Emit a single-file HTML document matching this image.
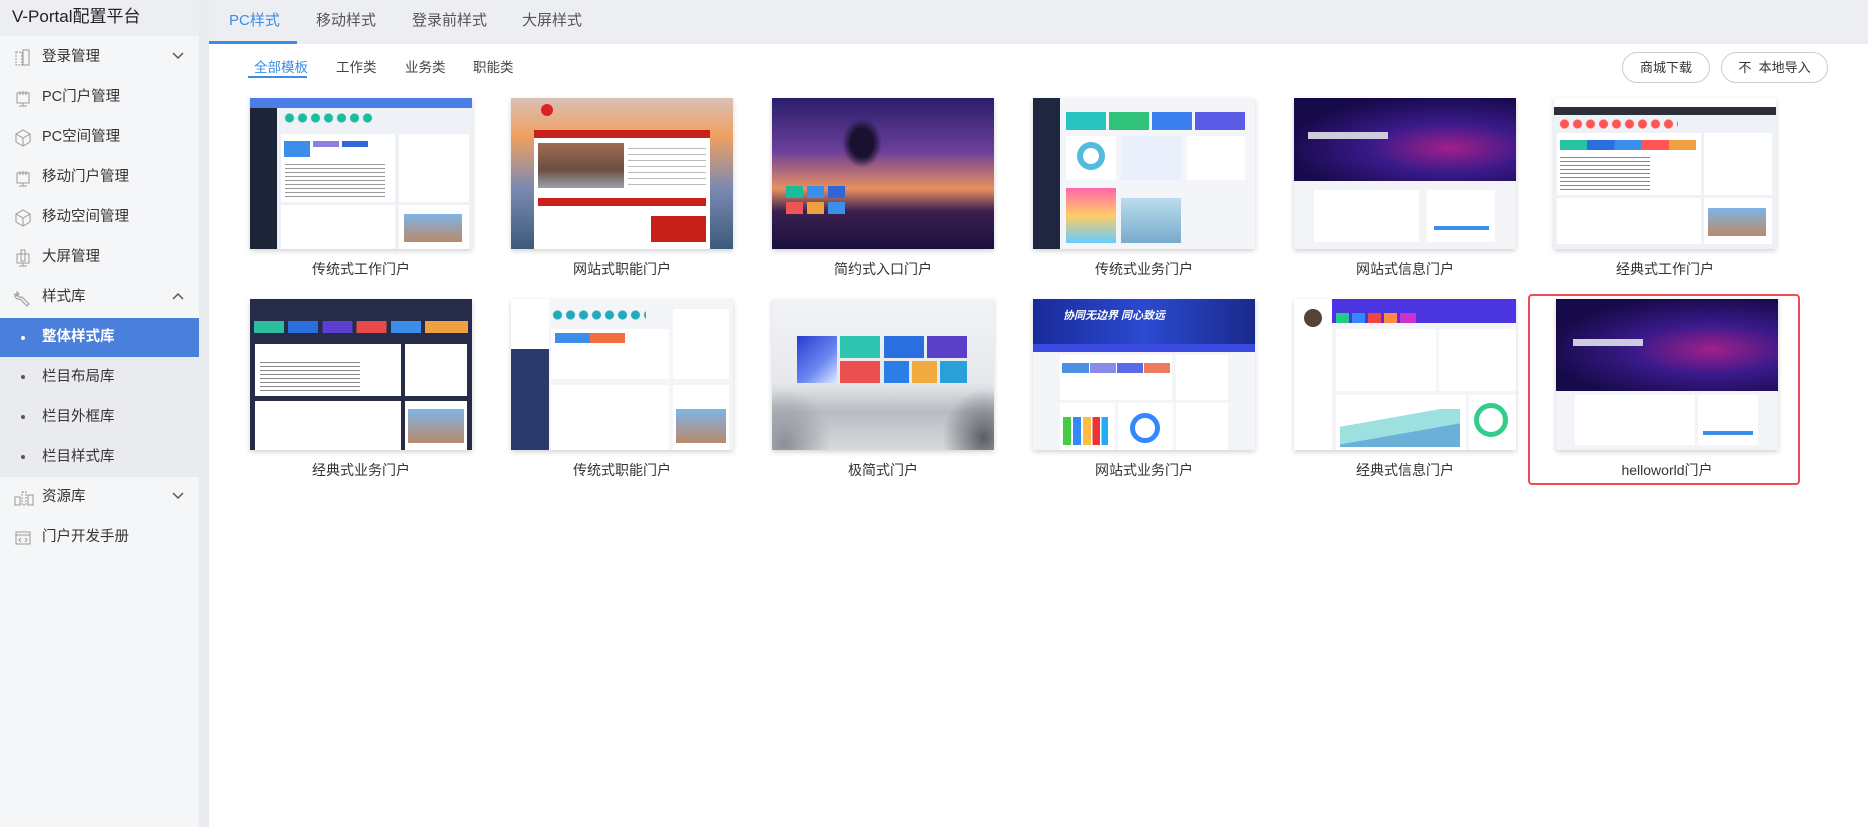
<!DOCTYPE html>
<html><head><meta charset="utf-8">
<style>
*{margin:0;padding:0;box-sizing:border-box}
body{width:1868px;height:827px;overflow:hidden;background:#e9ebee;font-family:"Liberation Sans","Noto Sans CJK SC",sans-serif;color:#333;position:relative}
.side{position:absolute;left:0;top:0;width:199px;height:827px;background:#f5f6f8}
.logo{height:36px;background:#eceef1;font-size:17px;line-height:34px;padding-left:12px;color:#222}
.mi{position:absolute;left:0;width:199px;height:40px;font-size:14.5px;line-height:40px;color:#333}
.mi .t{position:absolute;left:42px}
.mi svg.ic{position:absolute;left:14px;top:12px}
.mi .ch{position:absolute;left:172px;top:15px}
.sub{background:#e9ebef}
.sub .dot{position:absolute;left:21px;top:18px;width:4px;height:4px;border-radius:50%;background:#555}
.act{background:#4a7fdb;color:#fff;font-weight:bold}
.act .dot{background:#fff}
.main{position:absolute;left:209px;top:0;width:1659px;height:827px;background:#fff}
.tabs{position:absolute;left:0;top:0;width:1659px;height:44px;background:#eceef1}
.tab{position:absolute;top:9px;font-size:15px;color:#555}
.stab{position:absolute;top:56px;font-size:13.5px;color:#444}
.btn{position:absolute;top:52px;height:31px;border:1px solid #ccc;border-radius:16px;font-size:13px;line-height:29px;text-align:center;color:#333}
.card{position:absolute;width:222px;height:151px;overflow:hidden;box-shadow:0 2px 5px rgba(0,0,0,.18);background:#f0f2f6}
.lbl{position:absolute;width:222px;text-align:center;font-size:14px;color:#333}
.b{position:absolute}
</style></head><body>
<div class="side">
 <div class="logo">V-Portal配置平台</div>
 <div class="mi" style="top:37px"><svg class="ic" width="18" height="18" viewBox="0 0 18 18" fill="none" stroke="#999"><rect x="2" y="3" width="6" height="13" stroke-dasharray="2 1"/><rect x="9" y="1" width="6" height="15"/></svg><span class="t">登录管理</span><svg class="ch" width="12" height="8"><path d="M1 1l5 5 5-5" stroke="#555" fill="none" stroke-width="1.5"/></svg></div>
 <div class="mi" style="top:77px"><svg class="ic" width="18" height="18" viewBox="0 0 18 18" fill="none" stroke="#999"><rect x="3" y="4" width="12" height="10"/><path d="M6 2v4M9 2v4M12 2v4M9 14v3M5 17h8"/></svg><span class="t">PC门户管理</span></div>
 <div class="mi" style="top:117px"><svg class="ic" width="18" height="18" viewBox="0 0 18 18" fill="none" stroke="#999"><path d="M9 1l7 4v8l-7 4-7-4V5zM2 5l7 4 7-4M9 9v8"/></svg><span class="t">PC空间管理</span></div>
 <div class="mi" style="top:157px"><svg class="ic" width="18" height="18" viewBox="0 0 18 18" fill="none" stroke="#999"><rect x="3" y="4" width="12" height="10"/><path d="M6 2v4M9 2v4M12 2v4M9 14v3M5 17h8"/></svg><span class="t">移动门户管理</span></div>
 <div class="mi" style="top:197px"><svg class="ic" width="18" height="18" viewBox="0 0 18 18" fill="none" stroke="#999"><path d="M9 1l7 4v8l-7 4-7-4V5zM2 5l7 4 7-4M9 9v8"/></svg><span class="t">移动空间管理</span></div>
 <div class="mi" style="top:237px"><svg class="ic" width="18" height="18" viewBox="0 0 18 18" fill="none" stroke="#999"><rect x="3" y="5" width="12" height="9"/><rect x="7" y="1" width="4" height="11"/><path d="M9 14v3M5 17h8"/></svg><span class="t">大屏管理</span></div>
 <div class="mi" style="top:277px"><svg class="ic" width="18" height="18" viewBox="0 0 18 18" fill="none" stroke="#999"><path d="M3 3a4 4 0 0 0 5 5l7 7-2 2-7-7a4 4 0 0 1-5-5l2 2 2-2z"/></svg><span class="t">样式库</span><svg class="ch" width="12" height="8"><path d="M1 7l5-5 5 5" stroke="#555" fill="none" stroke-width="1.5"/></svg></div>
 <div class="mi act" style="top:318px;height:39px;line-height:39px"><span class="dot" style="position:absolute;left:21px;top:18px;width:4px;height:4px;border-radius:50%;background:#fff"></span><span class="t">整体样式库</span></div>
 <div class="mi sub" style="top:357px"><span class="dot"></span><span class="t">栏目布局库</span></div>
 <div class="mi sub" style="top:397px"><span class="dot"></span><span class="t">栏目外框库</span></div>
 <div class="mi sub" style="top:437px;height:40px"><span class="dot"></span><span class="t">栏目样式库</span></div>
 <div class="mi" style="top:477px"><svg class="ic" width="20" height="18" viewBox="0 0 20 18" fill="none" stroke="#999"><rect x="1" y="8" width="5" height="8"/><rect x="8" y="3" width="4" height="13" stroke-dasharray="2 1"/><rect x="14" y="6" width="5" height="10"/></svg><span class="t">资源库</span><svg class="ch" width="12" height="8"><path d="M1 1l5 5 5-5" stroke="#555" fill="none" stroke-width="1.5"/></svg></div>
 <div class="mi" style="top:517px"><svg class="ic" width="18" height="18" viewBox="0 0 18 18" fill="none" stroke="#999"><rect x="2" y="3" width="14" height="12"/><path d="M2 6h14M7 9l-2 2 2 2M11 9l2 2-2 2"/></svg><span class="t">门户开发手册</span></div>
</div>

<div class="main">
 <div class="tabs">
  <span class="tab" style="left:20px;color:#3a8ee6">PC样式</span>
  <div class="b" style="left:0;top:41px;width:88px;height:3px;background:#3a8ee6"></div>
  <span class="tab" style="left:107px">移动样式</span>
  <span class="tab" style="left:203px">登录前样式</span>
  <span class="tab" style="left:313px">大屏样式</span>
 </div>
 <span class="stab" style="left:45px;color:#3a8ee6">全部模板</span>
 <div class="b" style="left:39px;top:76px;width:59px;height:2px;background:#3a8ee6"></div>
 <span class="stab" style="left:127px">工作类</span>
 <span class="stab" style="left:196px">业务类</span>
 <span class="stab" style="left:264px">职能类</span>
 <div class="btn" style="left:1413px;width:88px">商城下载</div>
 <div class="btn" style="left:1512px;width:107px">不&nbsp; 本地导入</div>

 <!-- row 1 -->
 <div class="card" style="left:41px;top:98px;background:#eef1f6">
  <div class="b" style="left:0;top:0;width:222px;height:10px;background:#4a7ee6"></div>
  <div class="b" style="left:0;top:10px;width:27px;height:141px;background:#1d2538"></div>
  <div class="b" style="left:33px;top:14px;width:90px;height:12px;background:radial-gradient(circle,#1abc9c 4px,transparent 5px) 0 0/13px 12px"></div>
  <div class="b" style="left:31px;top:36px;width:114px;height:68px;background:#fff"></div>
  <div class="b" style="left:34px;top:43px;width:26px;height:16px;background:#3b8eea"></div>
  <div class="b" style="left:63px;top:43px;width:26px;height:6px;background:#8e7ee0"></div>
  <div class="b" style="left:92px;top:43px;width:26px;height:6px;background:#3066d8"></div>
  <div class="b" style="left:35px;top:63px;width:100px;height:38px;background:repeating-linear-gradient(#fff 0 3px,#999 3px 4px)"></div>
  <div class="b" style="left:149px;top:36px;width:70px;height:68px;background:#fff"></div>
  <div class="b" style="left:31px;top:107px;width:114px;height:44px;background:#fff"></div>
  <div class="b" style="left:149px;top:107px;width:70px;height:44px;background:#fff"></div>
  <div class="b" style="left:154px;top:116px;width:58px;height:28px;background:linear-gradient(#7fb4e6,#b98a6a)"></div>
 </div>
 <div class="lbl" style="left:41px;top:259px">传统式工作门户</div>

 <div class="card" style="left:302px;top:98px;background:linear-gradient(#d9c0b6 0%,#f0a060 25%,#7a8ab0 60%,#3c5a7a 100%)">
  <div class="b" style="left:23px;top:32px;width:176px;height:119px;background:#fff"></div>
  <div class="b" style="left:23px;top:32px;width:176px;height:8px;background:#c8201a"></div>
  <div class="b" style="left:27px;top:45px;width:86px;height:45px;background:linear-gradient(#a06a50,#6a5040 60%,#9aa0b0)"></div>
  <div class="b" style="left:117px;top:45px;width:78px;height:45px;background:repeating-linear-gradient(#fff 0 5px,#bbb 5px 6px)"></div>
  <div class="b" style="left:27px;top:100px;width:168px;height:8px;background:#c8201a"></div>
  <div class="b" style="left:140px;top:118px;width:55px;height:26px;background:#c8201a"></div>
  <div class="b" style="left:30px;top:6px;width:12px;height:12px;border-radius:50%;background:#d22"></div>
 </div>
 <div class="lbl" style="left:302px;top:259px">网站式职能门户</div>

 <div class="card" style="left:563px;top:98px;background:linear-gradient(#2a1f6a 0%,#6a3f9a 35%,#e89060 60%,#3a2050 75%,#1a1040 100%)">
  <div class="b" style="left:70px;top:20px;width:40px;height:50px;background:radial-gradient(ellipse,#1a1030 40%,transparent 70%)"></div>
  <div class="b" style="left:14px;top:88px;width:17px;height:12px;background:#1abc9c"></div>
  <div class="b" style="left:35px;top:88px;width:17px;height:12px;background:#3b8eea"></div>
  <div class="b" style="left:56px;top:88px;width:17px;height:12px;background:#3066d8"></div>
  <div class="b" style="left:14px;top:104px;width:17px;height:12px;background:#e55"></div>
  <div class="b" style="left:35px;top:104px;width:17px;height:12px;background:#f0a040"></div>
  <div class="b" style="left:56px;top:104px;width:17px;height:12px;background:#3b8eea"></div>
 </div>
 <div class="lbl" style="left:563px;top:259px">简约式入口门户</div>

 <div class="card" style="left:824px;top:98px;background:#f3f5f9">
  <div class="b" style="left:0;top:0;width:27px;height:151px;background:#1e2640"></div>
  <div class="b" style="left:33px;top:14px;width:40px;height:18px;background:#27c4c0"></div>
  <div class="b" style="left:76px;top:14px;width:40px;height:18px;background:#31c27c"></div>
  <div class="b" style="left:119px;top:14px;width:40px;height:18px;background:#3b7ef0"></div>
  <div class="b" style="left:162px;top:14px;width:50px;height:18px;background:#5b5be6"></div>
  <div class="b" style="left:33px;top:38px;width:50px;height:44px;background:#fff"></div>
  <div class="b" style="left:44px;top:44px;width:28px;height:28px;border-radius:50%;border:6px solid #5bd"></div>
  <div class="b" style="left:88px;top:38px;width:60px;height:44px;background:#eaf0fb"></div>
  <div class="b" style="left:154px;top:38px;width:58px;height:44px;background:#fff"></div>
  <div class="b" style="left:33px;top:90px;width:50px;height:55px;background:linear-gradient(#f6a,#fc6,#6cf)"></div>
  <div class="b" style="left:88px;top:100px;width:60px;height:45px;background:linear-gradient(#bde 0%,#7ac 100%)"></div>
 </div>
 <div class="lbl" style="left:824px;top:259px">传统式业务门户</div>

 <div class="card" style="left:1085px;top:98px;background:#f3f4f8">
  <div class="b" style="left:0;top:0;width:222px;height:83px;background:radial-gradient(ellipse at 70% 60%,#a0208a 0%,#3a1a8a 35%,#170a4a 75%)"></div>
  <div class="b" style="left:14px;top:34px;width:80px;height:7px;background:#ccd"></div>
  <div class="b" style="left:20px;top:92px;width:105px;height:52px;background:#fff"></div>
  <div class="b" style="left:133px;top:92px;width:68px;height:52px;background:#fff"></div>
  <div class="b" style="left:140px;top:128px;width:55px;height:4px;background:#3b8eea"></div>
 </div>
 <div class="lbl" style="left:1085px;top:259px">网站式信息门户</div>

 <div class="card" style="left:1345px;top:98px;background:#eef1f5">
  <div class="b" style="left:0;top:0;width:222px;height:9px;background:#fff"></div>
  <div class="b" style="left:0;top:9px;width:222px;height:8px;background:#2b2f3a"></div>
  <div class="b" style="left:4px;top:20px;width:120px;height:12px;background:radial-gradient(circle,#f55 4px,transparent 5px) 0 0/13px 12px"></div>
  <div class="b" style="left:3px;top:35px;width:144px;height:62px;background:#fff"></div>
  <div class="b" style="left:6px;top:42px;width:136px;height:10px;background:linear-gradient(90deg,#27c4a0 20%,#2a6fe0 20% 40%,#3b8eea 40% 60%,#f55 60% 80%,#f0a040 80%)"></div>
  <div class="b" style="left:6px;top:56px;width:90px;height:38px;background:repeating-linear-gradient(#fff 0 3px,#888 3px 4px)"></div>
  <div class="b" style="left:150px;top:35px;width:68px;height:62px;background:#fff"></div>
  <div class="b" style="left:3px;top:100px;width:144px;height:46px;background:#fff"></div>
  <div class="b" style="left:150px;top:100px;width:68px;height:46px;background:#fff"></div>
  <div class="b" style="left:154px;top:110px;width:58px;height:28px;background:linear-gradient(#7fb4e6,#b98a6a)"></div>
 </div>
 <div class="lbl" style="left:1345px;top:259px">经典式工作门户</div>

 <!-- row 2 -->
 <div class="card" style="left:41px;top:299px;background:#262b48">
  <div class="b" style="left:4px;top:22px;width:214px;height:12px;background:linear-gradient(90deg,#2bbfa0 14%,#262b48 14% 16%,#2a6fe0 16% 30%,#262b48 30% 32%,#5a3fd0 32% 46%,#262b48 46% 48%,#e84a4a 48% 62%,#262b48 62% 64%,#3b8eea 64% 78%,#262b48 78% 80%,#f0a040 80%)"></div>
  <div class="b" style="left:5px;top:45px;width:146px;height:52px;background:#fff"></div>
  <div class="b" style="left:10px;top:60px;width:100px;height:34px;background:repeating-linear-gradient(#fff 0 3px,#888 3px 4px)"></div>
  <div class="b" style="left:155px;top:45px;width:62px;height:52px;background:#fff"></div>
  <div class="b" style="left:5px;top:102px;width:146px;height:49px;background:#fff"></div>
  <div class="b" style="left:155px;top:102px;width:62px;height:49px;background:#fff"></div>
  <div class="b" style="left:158px;top:110px;width:56px;height:34px;background:linear-gradient(#7fb4e6,#b98a6a)"></div>
 </div>
 <div class="lbl" style="left:41px;top:460px">经典式业务门户</div>

 <div class="card" style="left:302px;top:299px;background:#f3f5f9">
  <div class="b" style="left:0;top:0;width:38px;height:151px;background:#fff"></div>
  <div class="b" style="left:0;top:50px;width:38px;height:101px;background:#2a3a6a"></div>
  <div class="b" style="left:40px;top:10px;width:95px;height:12px;background:radial-gradient(circle,#2ab 4px,transparent 5px) 0 0/13px 12px"></div>
  <div class="b" style="left:40px;top:30px;width:118px;height:50px;background:#fff"></div>
  <div class="b" style="left:44px;top:34px;width:70px;height:10px;background:linear-gradient(90deg,#3b8eea 50%,#f07040 50%)"></div>
  <div class="b" style="left:162px;top:10px;width:56px;height:70px;background:#fff"></div>
  <div class="b" style="left:40px;top:86px;width:118px;height:65px;background:#fff"></div>
  <div class="b" style="left:162px;top:86px;width:56px;height:65px;background:#fff"></div>
  <div class="b" style="left:165px;top:110px;width:50px;height:34px;background:linear-gradient(#7fb4e6,#b98a6a)"></div>
 </div>
 <div class="lbl" style="left:302px;top:460px">传统式职能门户</div>

 <div class="card" style="left:563px;top:299px;background:linear-gradient(#f2f3f6 0%,#e6e8ec 55%,#b8bcc2 75%,#d8dadd 100%)">
  <div class="b" style="left:25px;top:37px;width:40px;height:47px;background:linear-gradient(135deg,#2a3ad0,#6a8af0 60%,#e0e8ff)"></div>
  <div class="b" style="left:68px;top:37px;width:40px;height:22px;background:#2ec4b0"></div>
  <div class="b" style="left:112px;top:37px;width:40px;height:22px;background:#2a6fe0"></div>
  <div class="b" style="left:155px;top:37px;width:40px;height:22px;background:#5a3fc8"></div>
  <div class="b" style="left:68px;top:62px;width:40px;height:22px;background:#ea5050"></div>
  <div class="b" style="left:112px;top:62px;width:25px;height:22px;background:#2a7ee6"></div>
  <div class="b" style="left:140px;top:62px;width:25px;height:22px;background:#f0aa40"></div>
  <div class="b" style="left:168px;top:62px;width:27px;height:22px;background:#2aa0d8"></div>
  <div class="b" style="left:0;top:90px;width:60px;height:61px;background:radial-gradient(ellipse at 20% 90%,#8a8f96,transparent 70%)"></div>
  <div class="b" style="left:170px;top:90px;width:52px;height:61px;background:radial-gradient(ellipse at 80% 80%,#5a5f66,transparent 70%)"></div>
 </div>
 <div class="lbl" style="left:563px;top:460px">极简式门户</div>

 <div class="card" style="left:824px;top:299px;background:#f3f5f9">
  <div class="b" style="left:0;top:0;width:222px;height:45px;background:linear-gradient(90deg,#1a2a9a,#2a4ad0,#1a2a8a)"></div>
  <div class="b" style="left:30px;top:12px;width:110px;height:10px;color:#fff;font-size:11px;font-weight:bold;font-style:italic;line-height:10px">协同无边界 同心致远</div>
  <div class="b" style="left:0;top:45px;width:222px;height:8px;background:#3a4ae0"></div>
  <div class="b" style="left:27px;top:56px;width:112px;height:45px;background:#fff"></div>
  <div class="b" style="left:29px;top:64px;width:108px;height:10px;background:linear-gradient(90deg,#4a8fe0 25%,#fff 25% 26%,#8a8ae8 26% 50%,#fff 50% 51%,#5a6ae8 51% 75%,#fff 75% 76%,#f07a60 76%)"></div>
  <div class="b" style="left:143px;top:56px;width:52px;height:45px;background:#fff"></div>
  <div class="b" style="left:27px;top:104px;width:55px;height:47px;background:#fff"></div>
  <div class="b" style="left:30px;top:118px;width:45px;height:28px;background:linear-gradient(90deg,#4c4 18%,#fff 18% 22%,#38f 22% 40%,#fff 40% 44%,#fb4 44% 62%,#fff 62% 66%,#e33 66% 82%,#fff 82% 86%,#2af 86%)"></div>
  <div class="b" style="left:85px;top:104px;width:55px;height:47px;background:#fff"></div>
  <div class="b" style="left:97px;top:114px;width:30px;height:30px;border-radius:50%;border:5px solid #38f"></div>
  <div class="b" style="left:143px;top:104px;width:52px;height:47px;background:#fff"></div>
 </div>
 <div class="lbl" style="left:824px;top:460px">网站式业务门户</div>

 <div class="card" style="left:1085px;top:299px;background:#f3f5f9">
  <div class="b" style="left:0;top:0;width:222px;height:24px;background:#4a35e0"></div>
  <div class="b" style="left:0;top:0;width:38px;height:151px;background:#fff"></div>
  <div class="b" style="left:10px;top:10px;width:18px;height:18px;border-radius:50%;background:#543"></div>
  <div class="b" style="left:42px;top:14px;width:80px;height:10px;background:linear-gradient(90deg,#2c8 16%,#fff0 16% 20%,#38f 20% 36%,#fff0 36% 40%,#e44 40% 56%,#fff0 56% 60%,#f84 60% 76%,#fff0 76% 80%,#c3c 80%)"></div>
  <div class="b" style="left:42px;top:30px;width:100px;height:62px;background:#fff"></div>
  <div class="b" style="left:145px;top:30px;width:77px;height:62px;background:#fff"></div>
  <div class="b" style="left:42px;top:96px;width:130px;height:55px;background:#fff"></div>
  <div class="b" style="left:46px;top:110px;width:120px;height:38px;background:linear-gradient(170deg,#fff 30%,#9ce0e0 30% 60%,#6ab0d8 60%)"></div>
  <div class="b" style="left:175px;top:96px;width:47px;height:55px;background:#fff"></div>
  <div class="b" style="left:180px;top:104px;width:34px;height:34px;border-radius:50%;border:5px solid #3c8"></div>
 </div>
 <div class="lbl" style="left:1085px;top:460px">经典式信息门户</div>

 <div class="b" style="left:1319px;top:294px;width:272px;height:191px;border:2px solid #f04a55;border-radius:4px"></div>
 <div class="card" style="left:1347px;top:299px;background:#f3f4f8">
  <div class="b" style="left:0;top:0;width:222px;height:92px;background:radial-gradient(ellipse at 70% 55%,#a0208a 0%,#3a1a8a 35%,#170a4a 75%)"></div>
  <div class="b" style="left:17px;top:40px;width:70px;height:7px;background:#ccd"></div>
  <div class="b" style="left:19px;top:96px;width:120px;height:50px;background:#fff"></div>
  <div class="b" style="left:142px;top:96px;width:60px;height:50px;background:#fff"></div>
  <div class="b" style="left:147px;top:132px;width:50px;height:4px;background:#3b8eea"></div>
 </div>
 <div class="lbl" style="left:1347px;top:460px">helloworld门户</div>
</div>
</body></html>
